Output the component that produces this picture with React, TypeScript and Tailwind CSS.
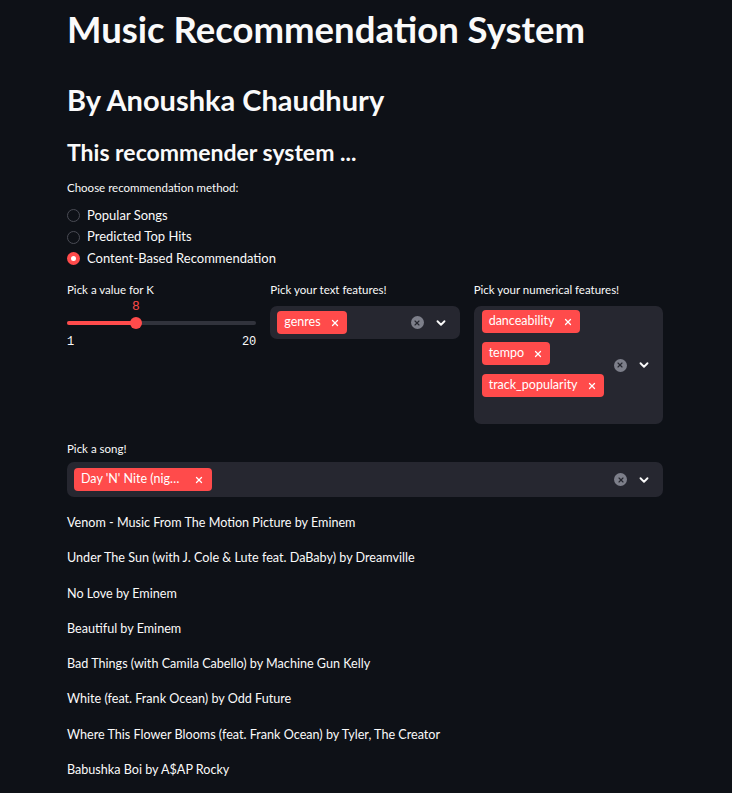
import { ChevronDown, X } from 'lucide-react'

const songs = [
  'Venom - Music From The Motion Picture by Eminem',
  'Under The Sun (with J. Cole & Lute feat. DaBaby) by Dreamville',
  'No Love by Eminem',
  'Beautiful by Eminem',
  'Bad Things (with Camila Cabello) by Machine Gun Kelly',
  'White (feat. Frank Ocean) by Odd Future',
  'Where This Flower Blooms (feat. Frank Ocean) by Tyler, The Creator',
  'Babushka Boi by A$AP Rocky',
]

const methods = ['Popular Songs', 'Predicted Top Hits', 'Content-Based Recommendation']

function Tag({ label, wide }: { label: string; wide?: boolean }) {
  return (
    <span
      className={
        wide
          ? 'inline-flex h-[23px] w-[138px] items-center justify-between rounded-[4px] bg-[#ff4b4b] pl-[7px] pr-[8px] text-[12.5px] text-white'
          : 'inline-flex h-[23px] items-center gap-[9px] rounded-[4px] bg-[#ff4b4b] pl-[7px] pr-[7px] text-[12.5px] text-white'
      }
    >
      {label}
      <X className="h-[10px] w-[10px]" strokeWidth={3} />
    </span>
  )
}

function Controls() {
  return (
    <div className="flex items-center gap-[10px] pr-[12px]">
      <span className="flex h-[13px] w-[13px] items-center justify-center rounded-full bg-[#7d7f8a]">
        <X className="h-[8px] w-[8px] text-[#262730]" strokeWidth={3.5} />
      </span>
      <ChevronDown className="h-[14px] w-[14px] text-[#fafafa]" strokeWidth={3.2} />
    </div>
  )
}

function Label({ children }: { children: string }) {
  return <div className="text-[11.5px] leading-[14px] text-[#fafafa]">{children}</div>
}

export default function App() {
  return (
    <div className="min-h-[793px] bg-[#0e1117] text-[#fafafa]" style={{ fontFamily: 'Lato, "Noto Sans", sans-serif' }}>
      <div className="ml-[67px] w-[596px] pt-[5px]">
        <h1 className="text-[36.5px] font-bold leading-[48px]">Music Recommendation System</h1>
        <h2 className="mt-[30px] text-[29px] font-bold leading-[34px]">By Anoushka Chaudhury</h2>
        <h3 className="mt-[21px] text-[23px] font-bold leading-[28px]">This recommender system ...</h3>

        <div className="mt-[15px]">
          <Label>Choose recommendation method:</Label>
          <div className="mt-[12px] flex flex-col gap-[4.5px]">
            {methods.map((m, i) => (
              <div key={m} className="flex h-[17px] items-center gap-[7px] text-[13px]">
                {i === 2 ? (
                  <span className="flex h-[13px] w-[13px] items-center justify-center rounded-full bg-[#ff4b4b]">
                    <span className="h-[5px] w-[5px] rounded-full bg-white" />
                  </span>
                ) : (
                  <span className="h-[13px] w-[13px] rounded-full border border-[#4a4c55]" />
                )}
                {m}
              </div>
            ))}
          </div>
        </div>

        <div className="mt-[16px] grid grid-cols-3 gap-[14px]">
          <div>
            <Label>Pick a value for K</Label>
            <div className="relative mt-[2px] h-[50px]">
              <div className="absolute left-[65px] top-[0px] font-['Liberation_Mono',monospace] text-[13px] leading-[15px] text-[#ff4b4b]">8</div>
              <div className="absolute left-0 right-0 top-[22px] h-[4px] rounded-full bg-[#31333c]" />
              <div className="absolute left-0 top-[22px] h-[4px] w-[70px] rounded-full bg-[#ff4b4b]" />
              <div className="absolute left-[63px] top-[18px] h-[12px] w-[12px] rounded-full bg-[#ff4b4b]" />
              <div className="absolute left-0 top-[34px] font-['Liberation_Mono',monospace] text-[12px] text-[#fafafa]">1</div>
              <div className="absolute right-0 top-[34px] font-['Liberation_Mono',monospace] text-[12px] text-[#fafafa]">20</div>
            </div>
          </div>
          <div>
            <Label>Pick your text features!</Label>
            <div className="mt-[9px] flex h-[33px] items-center justify-between rounded-[7px] bg-[#262730] pl-[7px]">
              <Tag label="genres" />
              <Controls />
            </div>
          </div>
          <div>
            <Label>Pick your numerical features!</Label>
            <div className="mt-[9px] flex h-[118px] items-center justify-between rounded-[7px] bg-[#262730] pl-[8px]">
              <div className="flex flex-col items-start gap-[9px] self-start pt-[4px]">
                <Tag label="danceability" />
                <Tag label="tempo" />
                <Tag label="track_popularity" />
              </div>
              <Controls />
            </div>
          </div>
        </div>

        <div className="mt-[18px]">
          <Label>Pick a song!</Label>
          <div className="mt-[6px] flex h-[35px] items-center justify-between rounded-[7px] bg-[#262730] pl-[7px]">
            <Tag label="Day 'N' Nite (nig…" wide />
            <Controls />
          </div>
        </div>

        <div className="mt-[17px] flex flex-col gap-[18.3px] text-[12.6px] leading-[17px]">
          {songs.map((s) => (
            <div key={s}>{s}</div>
          ))}
        </div>
      </div>
    </div>
  )
}
